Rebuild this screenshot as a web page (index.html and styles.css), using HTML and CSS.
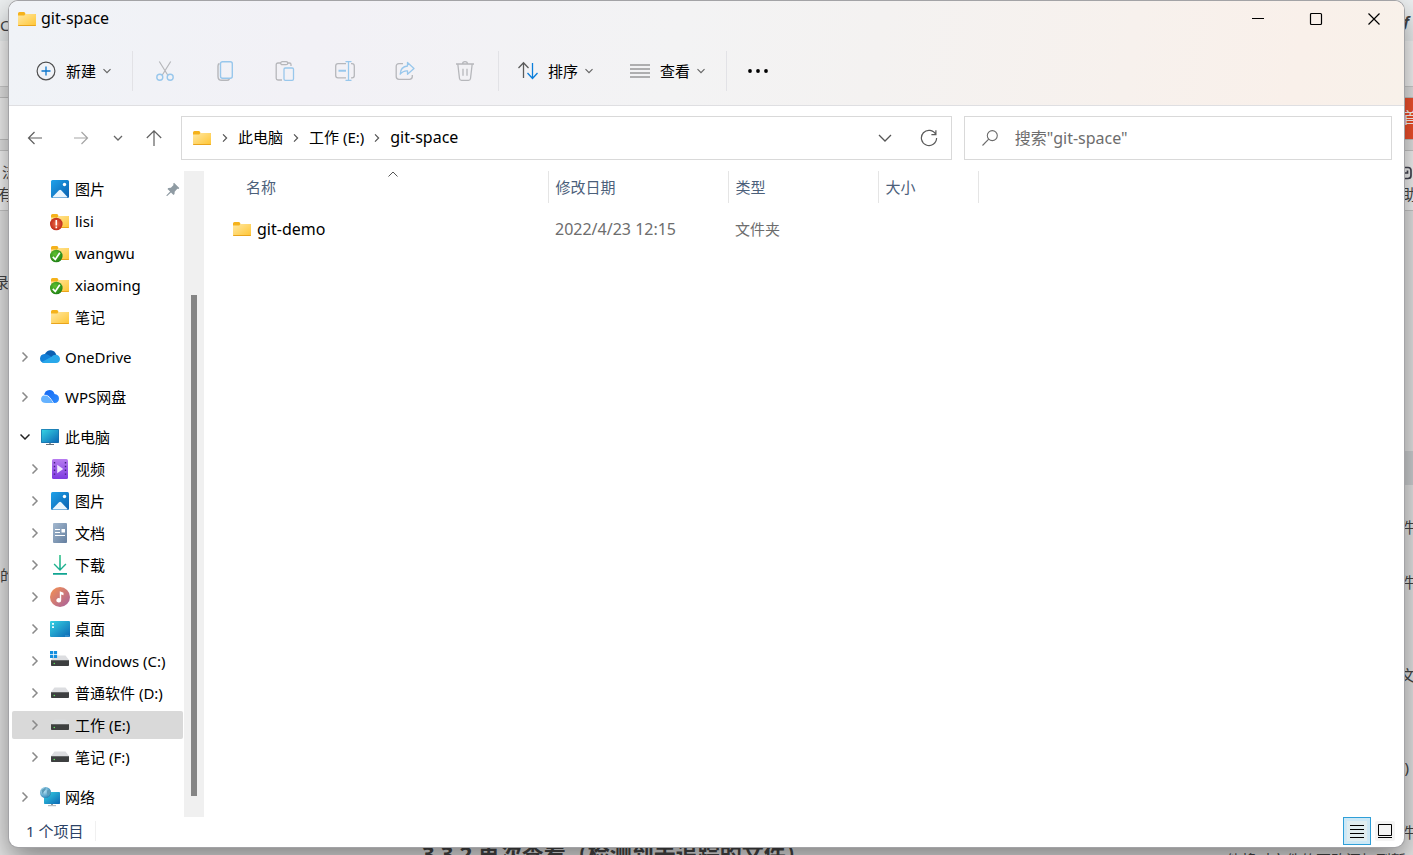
FILE: index.html
```html
<!DOCTYPE html>
<html lang="zh-CN">
<head>
<meta charset="utf-8">
<meta name="viewport" content="width=device-width, initial-scale=1">
<title>git-space</title>
<link rel="stylesheet" href="styles.css">
</head>
<body>
<svg class="defs" aria-hidden="true">
  <defs>
    <linearGradient id="g-folder" x1="0" y1="0" x2="1" y2="1"><stop offset="0" stop-color="#ffe8a3"/><stop offset="1" stop-color="#ffc533"/></linearGradient>
    <linearGradient id="g-blue" x1="0" y1="0" x2="1" y2="1"><stop offset="0" stop-color="#1fa2ea"/><stop offset="1" stop-color="#0a5fae"/></linearGradient>
    <linearGradient id="g-teal" x1="0" y1="0" x2="1" y2="1"><stop offset="0" stop-color="#35d3e3"/><stop offset="1" stop-color="#0c67b5"/></linearGradient>
    <linearGradient id="g-video" x1="0" y1="0" x2="0" y2="1"><stop offset="0" stop-color="#b77bf0"/><stop offset="1" stop-color="#7e3be0"/></linearGradient>
    <linearGradient id="g-doc" x1="0" y1="0" x2="1" y2="1"><stop offset="0" stop-color="#a3b8cf"/><stop offset="1" stop-color="#647f9f"/></linearGradient>
    <linearGradient id="g-down" x1="0" y1="0" x2="0" y2="1"><stop offset="0" stop-color="#35c48b"/><stop offset="1" stop-color="#0ea392"/></linearGradient>
    <linearGradient id="g-music" x1="0" y1="0" x2="1" y2="1"><stop offset="0" stop-color="#f6924f"/><stop offset="1" stop-color="#a6609f"/></linearGradient>
    <linearGradient id="g-wps" x1="0" y1="0" x2="1" y2="1"><stop offset="0" stop-color="#1367f2"/><stop offset="1" stop-color="#2f8dff"/></linearGradient>
    <radialGradient id="g-ok" cx=".4" cy=".35" r=".7"><stop offset="0" stop-color="#5fc02e"/><stop offset="1" stop-color="#1d7f16"/></radialGradient>
    <radialGradient id="g-bad" cx=".5" cy=".5" r=".6"><stop offset="0" stop-color="#f0704a"/><stop offset="1" stop-color="#b51e12"/></radialGradient>
    <radialGradient id="g-globe" cx=".35" cy=".35" r=".7"><stop offset="0" stop-color="#c5ecfa"/><stop offset="1" stop-color="#2581b5"/></radialGradient>

    <symbol id="folder" viewBox="0 0 20 20"><path d="M1 4.500a1.500 1.500 0 0 1 1.500-1.500h4.300q.7 0 1 .6l.7 1.400h10.500v3H1z" fill="#f5b21b"/><path d="M1 6.500h5.700q.6 0 1-.5l.6-1H18.500a.5.5 0 0 1 .5.5V16a1 1 0 0 1-1 1H2a1 1 0 0 1-1-1z" fill="url(#g-folder)"/><path d="M1.200 16.500h17.600" stroke="#e9a41c"/></symbol>
    <symbol id="folder-ok" viewBox="0 0 20 20"><use href="#folder"/><circle cx="6.300" cy="13" r="6.300" fill="url(#g-ok)"/><path d="M2.800 13.800l2.500 2.700L9.800 9.800" fill="none" stroke="#fff" stroke-width="1.700"/></symbol>
    <symbol id="folder-bad" viewBox="0 0 20 20"><use href="#folder"/><circle cx="6.300" cy="13" r="6.300" fill="url(#g-bad)"/><path d="M6.300 9v5.500M6.300 15.500v1.700" stroke="#fff" stroke-width="1.600"/></symbol>
    <symbol id="pictures" viewBox="0 0 20 20"><rect x="1" y="1" width="18" height="18" rx="1.500" fill="url(#g-blue)"/><circle cx="14.500" cy="5.500" r="1.700" fill="#fff"/><path d="M2.500 18L9 11.200q1.100-1 2.200 0L17.500 18q0 .5-.5.5H3q-.5 0-.5-.5z" fill="#eaf5fd"/></symbol>
    <symbol id="onedrive" viewBox="0 0 20 20"><path d="M4.500 7.500Q7 3 11 3.200q4 .3 5.300 4.500l-5 4z" fill="#0b5fb2"/><path d="M5 16Q0 15.800 0 11.500 .2 7.400 4.500 7q2-.2 4 1l7.500 5z" fill="#1380d8"/><path d="M11.500 9.700q1.800-2.400 4.800-2 3.500.8 3.700 4.200-.2 3.800-4 4.100H5q-2 0-3.200-1z" fill="#29a8ea"/></symbol>
    <symbol id="wps" viewBox="0 0 20 20"><path d="M4 9Q4.500 3.200 9.500 3q4 0 5 4 4.500.6 4.500 4.700-.2 4-4.300 4.300h-3L8 8.500 6.500 12z" fill="url(#g-wps)"/><path d="M6 16q-5-.2-5-4 .3-3.600 4-3.800 2.400 0 4 2.200l4 5.600z" fill="#65b2ff"/><path d="M4 8.300q3.500-1 6 2.500l3.500 5.200" fill="none" stroke="#fff" stroke-width=".8"/></symbol>
    <symbol id="monitor" viewBox="0 0 20 20"><path d="M9 16h2v2H9z" fill="#8c969e"/><path d="M6 17.500h8" stroke="#657079"/><rect x="1" y="2" width="18" height="14" rx=".8" fill="#186eaa"/><rect x="1.700" y="2.700" width="16.600" height="12.600" fill="url(#g-teal)"/></symbol>
    <symbol id="video" viewBox="0 0 20 20"><rect x="2" width="16" height="20" rx="1.500" fill="url(#g-video)"/><path d="M4.500 3v15M15.500 3v15" stroke="#432080" stroke-width="1.400" stroke-dasharray="1.400 2.400"/><path d="M7.200 5.800l6 4.200-6 4.200z" fill="#f1e8ff"/></symbol>
    <symbol id="docs" viewBox="0 0 20 20"><rect x="3" width="14" height="20" rx="1" fill="url(#g-doc)"/><path d="M5 6.500h5M5 9.500h5M5 12.500h10" stroke="#fff"/><path d="M11.500 6h3.500v3.500h-3.500z" fill="#fff"/></symbol>
    <symbol id="download" viewBox="0 0 20 20"><path d="M9.200 0h1.600v13.200l4.600-4.700 1 1.100L10 16 3.600 9.600l1-1.100 4.600 4.700zM3 18h14v1.700H3z" fill="url(#g-down)"/></symbol>
    <symbol id="music" viewBox="0 0 20 20"><circle cx="10" cy="10" r="10" fill="url(#g-music)"/><path d="M9.800 4.300l3.700 1.500v2.500l-2.300-.8v5.700a2.400 2.200 0 1 1-1.400-2z" fill="#fff"/></symbol>
    <symbol id="desktop" viewBox="0 0 20 20"><rect y="2" width="20" height="16" rx="1" fill="url(#g-teal)"/><path d="M3 4v5" stroke="#fff" stroke-width="1.800" stroke-dasharray="1.800 1.400"/><path d="M15.500 17h3" stroke="#8fd2f5" stroke-dasharray="1 1"/></symbol>
    <symbol id="drive" viewBox="0 0 20 20"><path d="M4.500 4.500h11L19 9H1z" fill="#dcdde0"/><rect x="1" y="9" width="18" height="6" rx=".8" fill="#3d3f40"/><path d="M1.500 9.500h17" stroke="#646667"/><circle cx="4.300" cy="12.500" r=".8" fill="#5ee05e"/></symbol>
    <symbol id="drive-c" viewBox="0 0 20 20"><use href="#drive"/><path d="M0 0h3.200v3.200H0zm3.900 0h3.200v3.200H3.900zM0 3.900h3.200v3.200H0zm3.900 0h3.200v3.200H3.900z" fill="#158fdf"/></symbol>
    <symbol id="network" viewBox="0 0 20 20"><path d="M11 16h2v2h-2z" fill="#8c969e"/><path d="M8 18.700h8" stroke="#a3adb4"/><rect x="4" y="5" width="16" height="12" rx=".7" fill="url(#g-teal)"/><circle cx="5.500" cy="5.500" r="5.500" fill="url(#g-globe)"/><path d="M1.500 3q3-2 4-2.500 1 2-1 3.500t-1 4Q1.500 6 1.500 3zM7 3.500q2-1 3.500.5Q11 7 8 9.500q0-2-1-3z" fill="#5b9bb8"/></symbol>
    <symbol id="pushpin" viewBox="0 0 14 14"><path d="M8 .8l5.300 5.300-.8.900-1.200-.2-2.600 2.900-.2 2.400-1 .8L5 10.400 1.200 14H.5v-.7l3.600-3.800L1.500 7l.8-1 2.600-.3 2.600-2.600-.3-1.400z" fill="#8f9ba3"/></symbol>
    <symbol id="chev-down" viewBox="0 0 10 10"><path d="M1.500 3.200L5 6.700l3.500-3.500" fill="none" stroke="currentColor" stroke-width="1.200"/></symbol>
    <symbol id="chev-right" viewBox="0 0 10 10"><path d="M2.500.5L7 5 2.500 9.500" fill="none" stroke="currentColor" stroke-width="1.500"/></symbol>
  </defs>
</svg>

<div class="backdrop" aria-hidden="true">
  <span class="strip strip-top"></span><span class="strip strip-tools"></span><span class="strip strip-menu"></span>
  <span class="strip strip-page"></span>
  <span class="frag frag-c">C</span><span class="frag frag-bar">|</span>
  <span class="frag frag-fan">泛</span><span class="frag frag-you">有</span><span class="frag frag-lu">录</span><span class="frag frag-de">的</span>
  <span class="frag frag-f">f</span><span class="badge">首</span><span class="frag frag-cam"><svg class="i14" viewBox="0 0 14 14"><path d="M1 1.500h8q3 0 3 3v5q0 3-3 3H1M1 7h7.500V4.500" fill="none" stroke="#454552" stroke-width="1.700"/></svg></span><span class="frag frag-zhu">助</span>
  <span class="selected-block"></span>
  <span class="frag frag-r1">件</span><span class="frag frag-r2">件</span><span class="frag frag-r3">文</span><span class="frag frag-r4">)</span><span class="frag frag-r5">件</span>
  <span class="doc-title">3.3.2 再次查看（检测到未追踪的文件）</span>
  <span class="doc-side">他将对文件的更改添加到暂</span>
</div>

<main class="window">
  <header class="chrome">
    <div class="titlebar">
      <svg class="i20"><use href="#folder"/></svg>
      <h1 class="title">git-space</h1>
      <div class="win-controls">
        <button class="win-btn" aria-label="最小化"><svg class="i14" viewBox="0 0 14 14"><path d="M1 6.500h12" stroke="#000"/></svg></button>
        <button class="win-btn" aria-label="最大化"><svg class="i14" viewBox="0 0 14 14"><rect x="1.500" y="1.500" width="11" height="11" rx="1" fill="none" stroke="#000" stroke-width="1.200"/></svg></button>
        <button class="win-btn" aria-label="关闭"><svg class="i14" viewBox="0 0 14 14"><path d="M1.500 1.500l11 11M12.500 1.500l-11 11" stroke="#000" stroke-width="1.200"/></svg></button>
      </div>
    </div>
    <div class="toolbar">
      <button class="tool tool-new"><svg class="i20" viewBox="0 0 20 20"><circle cx="10" cy="10" r="8.900" fill="none" stroke="#505050" stroke-width="1.200"/><path d="M10 5.500v9M5.500 10h9" stroke="#0b76cc" stroke-width="1.300"/></svg><span>新建</span><svg class="chev"><use href="#chev-down"/></svg></button>
      <span class="divider"></span>
      <div class="icon-tools">
        <button class="icon-tool" disabled aria-label="剪切"><svg class="i20" viewBox="0 0 20 20"><path d="M4.300.5l8.700 14M15.700.5L7 14.500" stroke="#b6b7bb" stroke-width="1.200"/><g fill="none" stroke="#98c7ec" stroke-width="1.400"><circle cx="4.800" cy="16.300" r="3"/><circle cx="15.200" cy="16.300" r="3"/></g></svg></button>
        <button class="icon-tool" disabled aria-label="复制"><svg class="i20" viewBox="0 0 20 20" fill="none" stroke-width="1.400"><path d="M4.500 2.500Q3 3 3 5v10.500Q3 19.300 6.800 19.300H12q1.700 0 2.500-1.500" stroke="#b6b7bb"/><rect x="5.500" y=".7" width="11.800" height="16.600" rx="2" stroke="#98c7ec"/></svg></button>
        <button class="icon-tool" disabled aria-label="粘贴"><svg class="i20" viewBox="0 0 20 20" fill="none" stroke-width="1.300"><path d="M6 2H3q-1.800 0-1.800 1.800v13.400Q1.200 19 3 19h4M13 2h1.500q1.500 0 1.500 1.500V5" stroke="#b6b7bb"/><rect x="5.700" y=".7" width="7" height="3" rx="1.500" stroke="#b6b7bb"/><rect x="9" y="7" width="9.500" height="12.300" rx="1.300" stroke="#98c7ec"/></svg></button>
        <button class="icon-tool" disabled aria-label="重命名"><svg class="i20" viewBox="0 0 20 20" fill="none" stroke-width="1.300"><path d="M11 2.700H3q-2.300 0-2.300 2.300v9.500q0 2.300 2.300 2.300h8M16 2.700h1q2.300 0 2.300 2.300v9.500q0 2.300-2.300 2.300h-1" stroke="#b6b7bb"/><path d="M10.500.7h6M10.500 19.300h6M13.500.7v18.600" stroke="#98c7ec"/><path d="M3.500 9.800h7.500" stroke="#98c7ec" stroke-width="2"/></svg></button>
        <button class="icon-tool" disabled aria-label="共享"><svg class="i20" viewBox="0 0 20 20" fill="none" stroke-width="1.300"><path d="M8 2.700H4Q1.200 2.700 1.200 5.500v10Q1.200 18.300 4 18.300h10.500q2.800 0 2.800-2.800V14" stroke="#b6b7bb"/><path d="M12.500 1.500L19 7.500l-6.500 5.800V9.800Q8 9.500 5.200 13.200 5.500 5.500 12.500 5z" stroke="#98c7ec" stroke-linejoin="round"/></svg></button>
        <button class="icon-tool" disabled aria-label="删除"><svg class="i20" viewBox="0 0 20 20" fill="none" stroke="#b6b7bb" stroke-width="1.300"><path d="M1 3h18M2.800 3l1.700 14.500q.2 1.800 2 1.800h7q1.800 0 2-1.800L17.200 3M7.500 3q0-2.300 2.500-2.300T12.500 3M8 7.800v7M12 7.800v7"/></svg></button>
      </div>
      <span class="divider"></span>
      <button class="tool tool-sort"><svg class="i20" viewBox="0 0 20 20" fill="none" stroke-width="1.300"><path d="M5.500 17V2M.5 7l5-5.200 5 5.200" stroke="#5b5b5b"/><path d="M14.500 2v15.500M9.500 12l5 5.500 5-5.500" stroke="#0b7edb"/></svg><span>排序</span><svg class="chev"><use href="#chev-down"/></svg></button>
      <button class="tool tool-view"><svg class="i20" viewBox="0 0 20 20"><path d="M0 4h20M0 8h20M0 12h20M0 16h20" stroke="#6b6b6b" stroke-width="1.200"/></svg><span>查看</span><svg class="chev"><use href="#chev-down"/></svg></button>
      <span class="divider"></span>
      <button class="tool tool-more" aria-label="更多"><svg class="i20" viewBox="0 0 20 20"><circle cx="2" cy="10" r="1.900"/><circle cx="10" cy="10" r="1.900"/><circle cx="18" cy="10" r="1.900"/></svg></button>
    </div>
  </header>

  <div class="navrow">
    <nav class="history" aria-label="历史">
      <button class="nav-btn" aria-label="后退"><svg class="i16" viewBox="0 0 16 16" fill="none" stroke="#5f5f5f" stroke-width="1.200"><path d="M15 8H1.500M7.500 2L1.500 8l6 6"/></svg></button>
      <button class="nav-btn" aria-label="前进"><svg class="i16" viewBox="0 0 16 16" fill="none" stroke="#a5a5a5" stroke-width="1.200"><path d="M1 8h13.500M8.500 2l6 6-6 6"/></svg></button>
      <button class="nav-btn nav-recent" aria-label="最近位置"><svg class="chev" viewBox="0 0 10 10"><path d="M1 3l4 4 4-4" fill="none" stroke="currentColor" stroke-width="1.300"/></svg></button>
      <button class="nav-btn" aria-label="向上"><svg class="i16" viewBox="0 0 16 16" fill="none" stroke="#5f5f5f" stroke-width="1.200"><path d="M8 16V1M.8 8L8 .9 15.200 8"/></svg></button>
    </nav>
    <div class="address">
      <svg class="i20"><use href="#folder"/></svg>
      <svg class="crumb-sep"><use href="#chev-right"/></svg><a class="crumb" href="#pc">此电脑</a>
      <svg class="crumb-sep"><use href="#chev-right"/></svg><a class="crumb" href="#e">工作 (E:)</a>
      <svg class="crumb-sep"><use href="#chev-right"/></svg><a class="crumb crumb-last" href="#git-space">git-space</a>
      <button class="addr-btn addr-first" aria-label="上一个位置"><svg class="i14" viewBox="0 0 14 14"><path d="M1 4l6 6 6-6" fill="none" stroke="#555" stroke-width="1.300"/></svg></button>
      <button class="addr-btn" aria-label="刷新"><svg class="i18" viewBox="0 0 18 18"><path d="M15.800 5.500A7.600 7.600 0 1 0 16.600 9M15.900 1.200v4.500h-4.500" fill="none" stroke="#5a5a5a" stroke-width="1.200"/></svg></button>
    </div>
    <label class="search">
      <svg class="i18" viewBox="0 0 18 18"><circle cx="11.300" cy="6.600" r="5" fill="none" stroke="#6b6b6b" stroke-width="1.100"/><path d="M7.700 10.200L1.500 16.500" stroke="#6b6b6b" stroke-width="1.100"/></svg>
      <input class="search-input" type="search" aria-label="搜索" placeholder='搜索"git-space"'>
    </label>
  </div>

  <div class="body">
    <nav class="tree" aria-label="导航窗格">
      <ul class="tree-list">
        <li><a class="node sub" href="#"><span class="exp"></span><svg class="i20"><use href="#pictures"/></svg><span>图片</span><svg class="pin"><use href="#pushpin"/></svg></a></li>
        <li><a class="node sub" href="#"><span class="exp"></span><svg class="i20"><use href="#folder-bad"/></svg><span>lisi</span></a></li>
        <li><a class="node sub" href="#"><span class="exp"></span><svg class="i20"><use href="#folder-ok"/></svg><span>wangwu</span></a></li>
        <li><a class="node sub" href="#"><span class="exp"></span><svg class="i20"><use href="#folder-ok"/></svg><span>xiaoming</span></a></li>
        <li><a class="node sub" href="#"><span class="exp"></span><svg class="i20"><use href="#folder"/></svg><span>笔记</span></a></li>
        <li class="root"><a class="node" href="#"><svg class="exp"><use href="#chev-right"/></svg><svg class="i20"><use href="#onedrive"/></svg><span>OneDrive</span></a></li>
        <li class="root"><a class="node" href="#"><svg class="exp"><use href="#chev-right"/></svg><svg class="i20"><use href="#wps"/></svg><span>WPS网盘</span></a></li>
        <li class="root"><a class="node open" href="#pc" id="pc"><svg class="exp" viewBox="0 0 10 10"><path d="M.5 2.500L5 7l4.500-4.500" fill="none" stroke="currentColor" stroke-width="1.500"/></svg><svg class="i20"><use href="#monitor"/></svg><span>此电脑</span></a></li>
        <li><a class="node sub" href="#"><svg class="exp"><use href="#chev-right"/></svg><svg class="i20"><use href="#video"/></svg><span>视频</span></a></li>
        <li><a class="node sub" href="#"><svg class="exp"><use href="#chev-right"/></svg><svg class="i20"><use href="#pictures"/></svg><span>图片</span></a></li>
        <li><a class="node sub" href="#"><svg class="exp"><use href="#chev-right"/></svg><svg class="i20"><use href="#docs"/></svg><span>文档</span></a></li>
        <li><a class="node sub" href="#"><svg class="exp"><use href="#chev-right"/></svg><svg class="i20"><use href="#download"/></svg><span>下载</span></a></li>
        <li><a class="node sub" href="#"><svg class="exp"><use href="#chev-right"/></svg><svg class="i20"><use href="#music"/></svg><span>音乐</span></a></li>
        <li><a class="node sub" href="#"><svg class="exp"><use href="#chev-right"/></svg><svg class="i20"><use href="#desktop"/></svg><span>桌面</span></a></li>
        <li><a class="node sub" href="#"><svg class="exp"><use href="#chev-right"/></svg><svg class="i20"><use href="#drive-c"/></svg><span>Windows (C:)</span></a></li>
        <li><a class="node sub" href="#"><svg class="exp"><use href="#chev-right"/></svg><svg class="i20"><use href="#drive"/></svg><span>普通软件 (D:)</span></a></li>
        <li><a class="node sub current" href="#e" id="e" aria-current="true"><svg class="exp"><use href="#chev-right"/></svg><svg class="i20"><use href="#drive"/></svg><span>工作 (E:)</span></a></li>
        <li><a class="node sub" href="#"><svg class="exp"><use href="#chev-right"/></svg><svg class="i20"><use href="#drive"/></svg><span>笔记 (F:)</span></a></li>
        <li class="root"><a class="node" href="#"><svg class="exp"><use href="#chev-right"/></svg><svg class="i20"><use href="#network"/></svg><span>网络</span></a></li>
      </ul>
    </nav>
    <div class="scroll"><div class="thumb"></div></div>
    <section class="files" id="git-space">
      <table class="list">
        <thead>
          <tr>
            <th class="c-name" scope="col" aria-sort="ascending"><button class="sort">名称<svg class="sort-mark" viewBox="0 0 10 6"><path d="M.5 5.500L5 1l4.500 4.500" fill="none" stroke="#555"/></svg></button></th>
            <th class="c-date" scope="col"><button class="sort">修改日期</button></th>
            <th class="c-type" scope="col"><button class="sort">类型</button></th>
            <th class="c-size" scope="col"><button class="sort">大小</button></th>
          </tr>
        </thead>
        <tbody>
          <tr><td><span class="file"><svg class="i20"><use href="#folder"/></svg>git-demo</span></td><td class="meta meta-date">2022/4/23 12:15</td><td class="meta">文件夹</td><td class="meta"></td></tr>
        </tbody>
      </table>
    </section>
  </div>

  <footer class="status">
    <span class="count">1 个项目</span>
    <div class="views">
      <button class="view view-on" aria-label="详细信息" aria-pressed="true"><svg class="i20" viewBox="0 0 20 20"><rect width="20" height="20" fill="#e0edf0"/><path d="M3 4.500h14M3 8.500h14M3 12.500h14M3 16.500h14" stroke="#000"/></svg></button>
      <button class="view" aria-label="大图标" aria-pressed="false"><svg class="i20" viewBox="0 0 20 20"><rect width="20" height="20" rx="2" fill="#f4f4f4"/><path d="M3.500 3.500h13v11h-13zM3 16.500h14" fill="none" stroke="#000"/></svg></button>
    </div>
  </footer>
</main>
</body>
</html>
```

FILE: styles.css
```css
* { box-sizing: border-box; }
body {
  margin: 0;
  min-height: 100vh;
  position: relative;
  overflow: hidden;
  display: flex;
  padding: 1px 9px 8px;
  background: #e6e6e6;
  color: #000;
  font: 15px/20px "Noto Sans", "Noto Sans CJK SC", sans-serif;
}
button { font: inherit; color: inherit; background: none; border: 0; padding: 0; display: flex; align-items: center; }
a { color: inherit; text-decoration: none; }
svg { display: block; flex: none; }
.defs { position: absolute; width: 0; height: 0; }
.i20 { width: 20px; height: 20px; overflow: visible; }
.i18 { width: 18px; height: 18px; }
.i16 { width: 16px; height: 16px; }
.i14 { width: 14px; height: 14px; }
.chev { width: 10px; height: 10px; color: #666; }

/* Page behind the window */
.backdrop { position: absolute; inset: 0; overflow: hidden; color: #454545; }
.backdrop span { position: absolute; white-space: nowrap; }
.backdrop .strip { left: 0; right: 0; }
.strip-top { top: 0; height: 41px; background: #edf0f1; }
.strip-tools { top: 41px; height: 46px; background: #f8f8f8; border-bottom: 1px solid #cfcfcf; }
.strip-menu { top: 97px; height: 43px; background: #f3f3f3; border-top: 1px solid #c4c4c4; border-bottom: 1px solid #c4c4c4; }
.strip-page { top: 150px; height: 61px; background: #f6f6f6; border-top: 1px solid #c9c9c9; border-bottom: 1px solid #c9c9c9; }
.frag-c { left: 0; top: 15px; }
.frag-bar { left: 6px; top: 54px; }
.frag-fan { left: 2px; top: 162px; }
.frag-you { left: -2px; top: 184px; }
.frag-lu { left: -6px; top: 272px; }
.frag-de { left: 0; top: 565px; }
.frag-f { right: 4px; top: 11px; font-weight: 700; font-style: italic; }
.badge { right: 0; top: 98px; width: 18px; height: 41px; padding-left: 8px; line-height: 38px; background: #f4522d; color: #fff; }
.frag-cam { right: 0; top: 166px; }
.frag-zhu { right: -4px; top: 184px; }
.selected-block { right: 0; top: 451px; width: 20px; height: 34px; background: #cfd1d3; }
.frag-r1 { right: -2px; top: 517px; }
.frag-r2 { right: -2px; top: 572px; }
.frag-r3 { right: -2px; top: 665px; }
.frag-r4 { right: 4px; top: 757px; }
.frag-r5 { right: -2px; top: 822px; }
.doc-title { left: 422px; top: 839px; font-size: 22px; line-height: 28px; font-weight: 700; }
.doc-side { left: 1226px; top: 850px; }

/* Window */
.window {
  position: relative;
  flex: 1;
  min-width: 0;
  display: flex;
  flex-direction: column;
  background: #fff;
  border-radius: 9px;
  overflow: hidden;
  box-shadow: 0 0 0 1px #a3a3a6, 0 12px 30px rgba(0, 0, 0, .45);
}
.chrome { background: linear-gradient(100deg, #f0f3f7 0%, #f2f1f6 22%, #f3f3f4 48%, #f4f2f1 62%, #f7f1ed 80%, #f9f0ea 92%, #f8f1ea 100%); border-bottom: 1px solid #dfdfe2; }
.titlebar { display: flex; align-items: center; height: 36px; padding: 0 1px 0 8px; gap: 4px; }
.title { margin: 0; font-size: 16px; line-height: 22px; font-weight: 400; padding-bottom: 2px; }
.win-controls { display: flex; margin-left: auto; }
.win-btn { width: 58px; height: 36px; justify-content: center; }

.toolbar { display: flex; align-items: center; height: 68px; padding: 0 27px 1px; }
.tool { gap: 10px; height: 40px; }
.tool .chev { margin-left: -4px; }
.divider { width: 1px; height: 40px; background: #e2e2e6; }
.tool-new { margin-right: 20px; }
.icon-tools { display: flex; margin: 0 3px 0 2px; }
.icon-tool { width: 60px; height: 40px; justify-content: center; }
.tool-sort { margin-left: 19px; }
.tool-view { margin: 0 20px 0 36px; }
.tool-more { margin-left: 21px; }

.navrow { display: flex; align-items: center; padding: 10px 12px 11px 0; }
.history { display: flex; width: 172px; padding-left: 18px; gap: 30px; }
.nav-btn { height: 32px; }
.nav-recent { margin: 0 -7px 0 -6px; }
.address { flex: 745 1 0; display: flex; align-items: center; height: 44px; padding: 0 13px 0 10px; border: 1px solid #d9d9d9; }
.crumb { padding-bottom: 2px; }
.crumb-last { font-size: 16px; }
.crumb-sep { width: 8px; height: 8px; margin: 0 9px; color: #555; }
.addr-btn { height: 32px; margin-left: 28px; }
.addr-btn.addr-first { margin-left: auto; }
.search { flex: 394 1 0; min-width: 0; display: flex; align-items: center; gap: 16px; height: 44px; margin-left: 12px; padding: 0 16px; border: 1px solid #d9d9d9; }
.search-input { flex: 1; min-width: 0; border: 0; padding: 0; background: none; font: inherit; font-size: 16px; outline: 0; }
.search-input::placeholder { color: #6d6d6d; opacity: 1; }

.body { flex: 1; display: flex; min-height: 0; }
.tree { width: 175px; }
.tree-list { list-style: none; margin: 0; padding: 2px 1px 4px 3px; }
.tree-list li { padding: 2px 0; }
.tree-list .root { margin-top: 8px; }
.node { display: flex; align-items: center; height: 28px; padding-left: 8px; border-radius: 2px; white-space: nowrap; }
.node span:not(.exp) { margin-left: 5px; padding-bottom: 1px; }
.node.sub { padding-left: 18px; }
.node.current { background: #d9d9d9; }
.exp { width: 10px; height: 10px; margin-right: 10px; color: #8a8a8a; }
.open .exp { color: #222; }
.pin { width: 14px; height: 14px; margin: 0 3px 0 auto; }
.scroll { width: 20px; padding: 124px 7px 21px; background: #f0f0f0; display: flex; }
.thumb { flex: 1; background: #858585; }
.files { flex: 1; min-width: 0; padding-left: 24px; }

.list { border-collapse: collapse; table-layout: fixed; width: 750px; }
.list th { height: 32px; padding: 0; font-weight: 400; border-right: 1px solid #e5e5e5; color: #4c607a; }
.c-name { width: 320px; }
.c-date { width: 180px; }
.c-type { width: 150px; }
.c-size { width: 100px; }
.sort { position: relative; width: 100%; height: 32px; padding-left: 7px; }
.c-name .sort { width: auto; min-width: 310px; margin-left: 10px; padding-left: 8px; }
.sort-mark { position: absolute; left: 0; right: 0; top: 0; margin: 0 auto; width: 10px; height: 6px; }
.list td { height: 52px; padding: 0; }
.list td.meta { padding-left: 7px; color: #6d6d6d; }
.list td.meta-date { font-size: 16px; }
.file { display: flex; align-items: center; gap: 5px; padding-left: 4px; font-size: 16px; }

.status { display: flex; align-items: center; justify-content: space-between; height: 30px; padding: 0 5px 2px 17px; color: #2b4266; }
.count { padding-right: 12px; border-right: 1px solid #f0f0f0; }
.views { display: flex; }
.view { width: 28px; height: 28px; justify-content: center; border: 1px solid transparent; }
.view-on { background: #cce8f6; border-color: #2f9fd8; }
```
